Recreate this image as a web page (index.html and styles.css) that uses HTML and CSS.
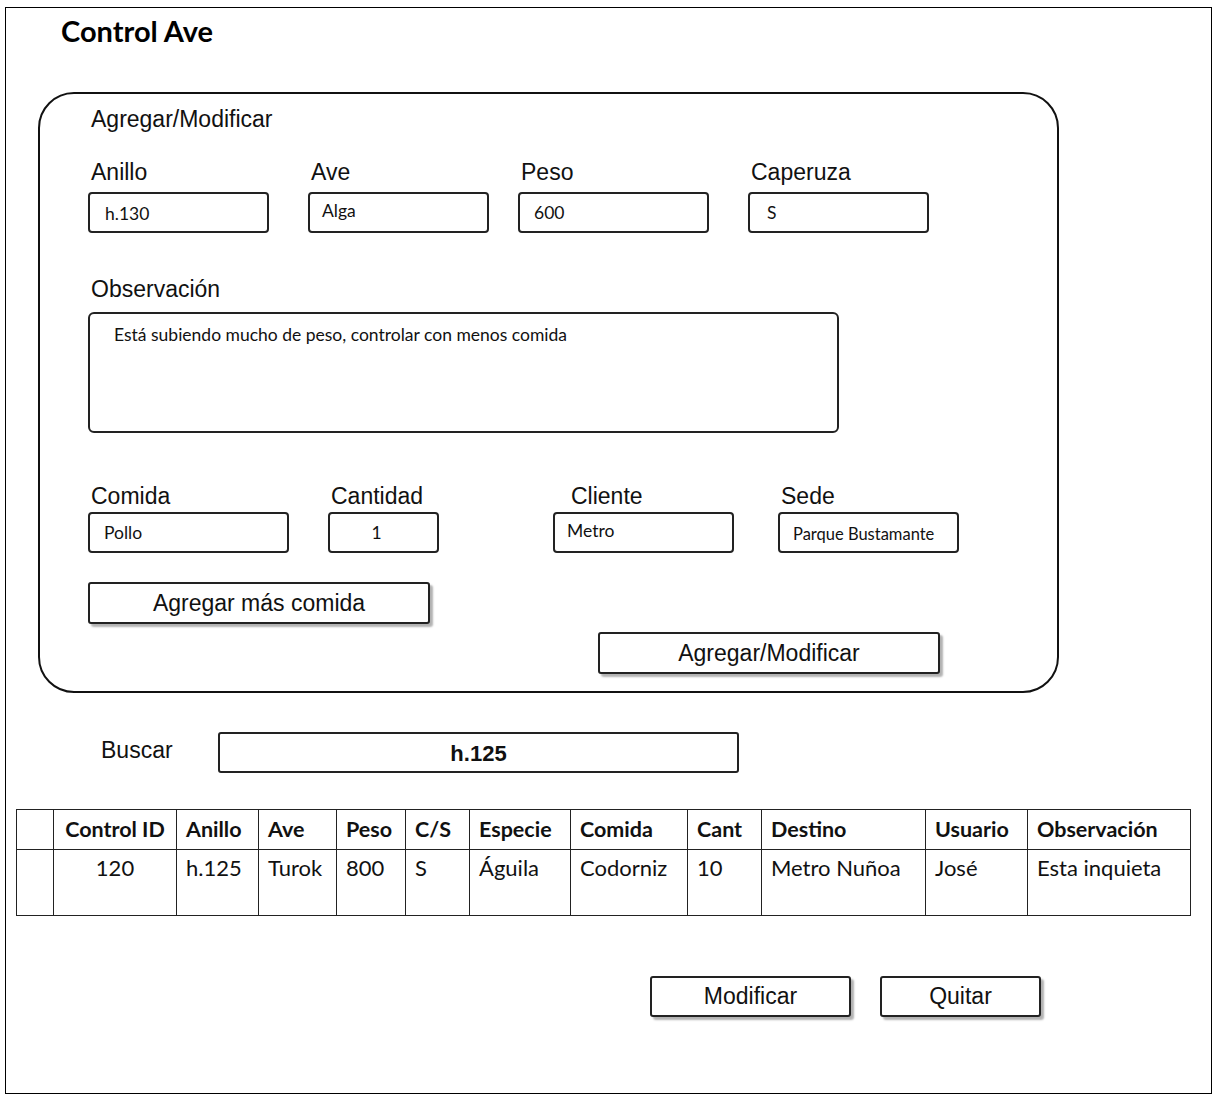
FILE: index.html
```html
<!doctype html>
<html lang="es">
  <head>
    <meta charset="utf-8">
    <title>Control Ave</title>
    <link rel="stylesheet" href="styles.css">
  </head>
  <body>
    <div class="frame">
      <h1 class="title">Control Ave</h1>

      <div class="panel">
        <div class="panel-title">Agregar/Modificar</div>

        <div class="row row-top">
          <div class="field f-anillo">
            <div class="label">Anillo</div>
            <div class="input w181 t-anillo">h.130</div>
          </div>
          <div class="field f-ave">
            <div class="label">Ave</div>
            <div class="input w181 t-ave">Alga</div>
          </div>
          <div class="field f-peso">
            <div class="label">Peso</div>
            <div class="input w191">600</div>
          </div>
          <div class="field">
            <div class="label">Caperuza</div>
            <div class="input w181 t-cap">S</div>
          </div>
        </div>

        <div class="obs">
          <div class="label">Observación</div>
          <div class="textarea">Está subiendo mucho de peso, controlar con menos comida</div>
        </div>

        <div class="row row-food">
          <div class="field f-comida">
            <div class="label">Comida</div>
            <div class="input w201">Pollo</div>
          </div>
          <div class="field f-cant">
            <div class="label">Cantidad</div>
            <div class="input w111 t-cant">1</div>
          </div>
          <div class="field f-cliente">
            <div class="label label-cliente">Cliente</div>
            <div class="input w181 t-ave">Metro</div>
          </div>
          <div class="field">
            <div class="label">Sede</div>
            <div class="input w181 t-sede">Parque Bustamante</div>
          </div>
        </div>

        <button class="btn btn-more">Agregar más comida</button>
        <button class="btn btn-save">Agregar/Modificar</button>
      </div>

      <div class="search">
        <div class="search-label">Buscar</div>
        <div class="search-box">h.125</div>
      </div>

      <table class="grid">
        <colgroup>
          <col style="width:37px">
          <col style="width:123px">
          <col style="width:82px">
          <col style="width:78px">
          <col style="width:69px">
          <col style="width:64px">
          <col style="width:101px">
          <col style="width:117px">
          <col style="width:74px">
          <col style="width:164px">
          <col style="width:102px">
          <col style="width:163px">
        </colgroup>
        <thead>
          <tr>
            <th></th>
            <th class="center">Control ID</th>
            <th>Anillo</th>
            <th>Ave</th>
            <th>Peso</th>
            <th>C/S</th>
            <th>Especie</th>
            <th>Comida</th>
            <th>Cant</th>
            <th>Destino</th>
            <th>Usuario</th>
            <th>Observación</th>
          </tr>
        </thead>
        <tbody>
          <tr>
            <td></td>
            <td class="center">120</td>
            <td>h.125</td>
            <td>Turok</td>
            <td>800</td>
            <td>S</td>
            <td>Águila</td>
            <td>Codorniz</td>
            <td>10</td>
            <td>Metro Nuñoa</td>
            <td>José</td>
            <td>Esta inquieta</td>
          </tr>
        </tbody>
      </table>

      <div class="actions">
        <button class="btn btn-mod">Modificar</button>
        <button class="btn btn-del">Quitar</button>
      </div>
    </div>
  </body>
</html>
```

FILE: styles.css
```css
html, body {
  margin: 0;
  padding: 0;
  background: #fff;
}

body {
  font-family: "Liberation Sans", Arial, sans-serif;
  color: #111;
}

.frame {
  margin: 7px 0 0 5px;
  width: 1207px;
  height: 1087px;
  box-sizing: border-box;
  border: 1px solid #000;
}

.title {
  margin: 0;
  padding: 5px 0 0 55px;
  height: 70px;
  box-sizing: border-box;
  font-family: Lato, "Open Sans", sans-serif;
  font-weight: bold;
  font-size: 29px;
  line-height: 36px;
  color: #000;
}

/* main rounded panel */
.panel {
  margin: 14px 0 0 32px;
  width: 1021px;
  height: 601px;
  box-sizing: border-box;
  border: 2px solid #111;
  border-radius: 36px;
  padding: 12px 0 0 48px;
}

.panel-title {
  font-size: 23px;
  line-height: 26px;
  padding-left: 3px;
}

.row {
  display: flex;
}

.row-top {
  margin-top: 27px;
}

.label {
  font-size: 23px;
  line-height: 26px;
  padding-left: 3px;
  margin-bottom: 7px;
}

.f-anillo { width: 220px; }
.f-ave { width: 210px; }
.f-peso { width: 230px; }
.f-comida { width: 240px; }
.f-cant { width: 225px; }
.f-cliente { width: 225px; }

.label-cliente {
  padding-left: 18px;
}

.input {
  height: 41px;
  box-sizing: border-box;
  border: 2px solid #222;
  border-radius: 4px;
  padding: 0 14px;
  font-family: Lato, "Open Sans", sans-serif;
  font-size: 17.5px;
  line-height: 38px;
  color: #111;
  white-space: nowrap;
}

.w181 { width: 181px; }
.w191 { width: 191px; }
.w201 { width: 201px; }
.w111 { width: 111px; }

.center { text-align: center; }

.t-anillo { padding-left: 15px; line-height: 40px; }
.t-ave { padding-left: 12px; line-height: 34px; }
.t-cap { padding-left: 17px; }
.t-cant { padding: 0 14px 0 0; text-align: center; }
.t-sede { padding: 0 0 0 13px; font-size: 16.5px; line-height: 40px; }

.obs {
  margin-top: 43px;
}

.obs .label {
  margin-bottom: 10px;
}

.textarea {
  width: 751px;
  height: 121px;
  box-sizing: border-box;
  border: 2px solid #222;
  border-radius: 6px;
  padding: 9px 24px;
  font-family: Lato, "Open Sans", sans-serif;
  font-size: 17.5px;
  line-height: 24px;
}

.row-food {
  margin-top: 50px;
}

.row-food .label {
  margin-bottom: 3px;
}

.btn {
  display: block;
  height: 42px;
  box-sizing: border-box;
  border: 2px solid #222;
  border-radius: 3px;
  background: #fff;
  box-shadow: 3px 3px 2px rgba(0, 0, 0, 0.3);
  font-family: "Liberation Sans", Arial, sans-serif;
  font-size: 23px;
  color: #111;
  padding: 0;
}

.btn-more {
  width: 342px;
  margin-top: 29px;
}

.btn-save {
  width: 342px;
  margin: 8px 0 0 510px;
}

/* search */
.search {
  display: flex;
  align-items: center;
  margin: 39px 0 0 95px;
}

.search-label {
  width: 117px;
  font-size: 23px;
  line-height: 26px;
  margin-top: -6px;
}

.search-box {
  width: 521px;
  height: 41px;
  box-sizing: border-box;
  border: 2px solid #222;
  border-radius: 3px;
  text-align: center;
  font-weight: bold;
  font-size: 22px;
  line-height: 39px;
}

/* results table */
.grid {
  margin: 36px 0 0 10px;
  width: 1174px;
  border-collapse: collapse;
  table-layout: fixed;
  font-family: Lato, "Open Sans", sans-serif;
  font-size: 22px;
  color: #111;
}

.grid th,
.grid td {
  border: 1px solid #222;
  padding: 0 0 0 9px;
  text-align: left;
  vertical-align: top;
}

.grid th {
  height: 39px;
  font-size: 21.5px;
  font-weight: bold;
  line-height: 38px;
}

.grid td {
  height: 66px;
  padding-top: 5px;
  line-height: 26px;
  box-sizing: border-box;
}

.grid .center {
  text-align: center;
  padding-left: 0;
}

.actions {
  display: flex;
  margin: 60px 0 0 644px;
  gap: 29px;
}

.btn-mod { width: 201px; height: 41px; }
.btn-del { width: 161px; height: 41px; }
```
